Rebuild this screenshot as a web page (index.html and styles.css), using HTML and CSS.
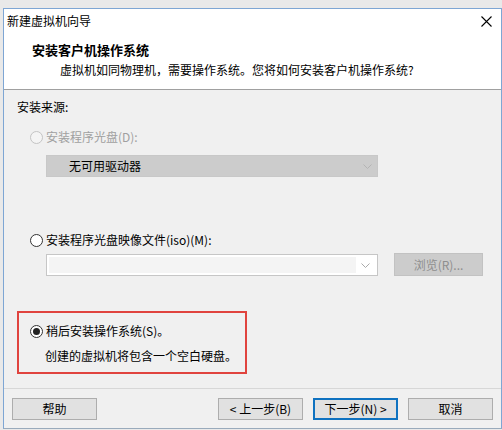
FILE: index.html
```html
<!DOCTYPE html>
<html lang="zh-CN">
<head>
    <meta charset="UTF-8">
    <title>新建虚拟机向导</title>
    <link rel="stylesheet" href="styles.css">
</head>
<body>
    <div class="window">
        <div class="titlebar">
            <span>新建虚拟机向导</span>
            <svg class="close" width="11" height="11" viewBox="0 0 11 11">
                <path d="M0.5 0.5 L10.5 10.5 M10.5 0.5 L0.5 10.5" stroke="#000" stroke-width="1.1" fill="none"/>
            </svg>
        </div>

        <div class="header">
            <div class="heading">安装客户机操作系统</div>
            <div class="subheading">虚拟机如同物理机，需要操作系统。您将如何安装客户机操作系统?</div>
        </div>

        <div class="content">
            <div class="label">安装来源:</div>

            <div class="option disabled opt-disc">
                <span class="radio"></span>
                <span>安装程序光盘(D):</span>
            </div>
            <div class="select-row">
                <div class="combo combo-disabled">
                    <span class="combo-text">无可用驱动器</span>
                    <svg class="chevron" width="9" height="5" viewBox="0 0 9 5"><path d="M0.5 0.5 L4.5 4.5 L8.5 0.5" stroke="#b4b4b4" fill="none"/></svg>
                </div>
            </div>

            <div class="option opt-iso">
                <span class="radio"></span>
                <span>安装程序光盘映像文件(iso)(M):</span>
            </div>
            <div class="select-row">
                <div class="combo combo-empty">
                    <span class="combo-field"></span>
                    <span class="combo-btn">
                        <svg width="9" height="5" viewBox="0 0 9 5"><path d="M0.5 0.5 L4.5 4.5 L8.5 0.5" stroke="#aaa" fill="none"/></svg>
                    </span>
                </div>
                <div class="browse">浏览(R)...</div>
            </div>

            <div class="highlight">
                <div class="option">
                    <span class="radio checked"></span>
                    <span>稍后安装操作系统(S)。</span>
                </div>
                <div class="note">创建的虚拟机将包含一个空白硬盘。</div>
            </div>
        </div>

        <div class="footer">
            <button class="btn">帮助</button>
            <div class="nav">
                <button class="btn">&lt; 上一步(B)</button>
                <button class="btn btn-default">下一步(N) &gt;</button>
                <button class="btn">取消</button>
            </div>
        </div>
    </div>
</body>
</html>
```

FILE: styles.css
```css
body {
    margin: 0;
    background-color: #e9e9e9;
    font-family: "Noto Sans CJK SC", "Liberation Sans", sans-serif;
    font-size: 12px;
    color: #000;
}

.window {
    margin: 8px 0 0 3px;
    width: 497px;
    height: 419px;
    border: 1px solid #7ea6d4;
    border-bottom-color: #9ab;
    background-color: #f0f0f0;
    display: flex;
    flex-direction: column;
    overflow: hidden;
}

.window > div {
    flex-shrink: 0;
}

.titlebar {
    height: 24px;
    padding: 0 9px 0 3px;
    display: flex;
    align-items: center;
    justify-content: space-between;
    background-color: #fff;
    line-height: 16px;
}

.close {
    margin-top: 1px;
}

.header {
    background-color: #fff;
    padding: 9px 0 11px 28px;
    border-bottom: 1px solid #a0a0a0;
    line-height: 16px;
}

.heading {
    font-size: 13px;
    font-weight: bold;
}

.subheading {
    margin-top: 4px;
    padding-left: 28px;
}

.content {
    flex: 1;
    padding: 9px 0 0 13px;
    line-height: 16px;
}

.window > .content {
    flex-shrink: 1;
}

.option {
    display: flex;
    align-items: center;
    gap: 3px;
}

.opt-disc {
    margin: 14px 0 0 13px;
}

.opt-iso {
    margin: 55px 0 0 13px;
}

.disabled {
    color: #a0a0a0;
}

.radio {
    width: 11px;
    height: 11px;
    border: 1px solid #333;
    border-radius: 50%;
    background-color: #fff;
    display: flex;
    align-items: center;
    justify-content: center;
}

.disabled .radio {
    border-color: #c4c4c4;
    background-color: #f4f4f4;
}

.radio.checked::after {
    content: "";
    width: 7px;
    height: 7px;
    border-radius: 50%;
    background-color: #222;
}

.select-row {
    display: flex;
    align-items: center;
    gap: 16px;
    margin: 10px 0 0 29px;
}

.opt-iso + .select-row {
    margin-top: 6px;
}

.combo {
    width: 332px;
    height: 22px;
    box-sizing: border-box;
    display: flex;
    align-items: center;
}

.combo-disabled {
    background-color: #cccccc;
    border: 1px solid #c8c8c8;
    justify-content: space-between;
    padding: 0 5px 0 22px;
}

.combo-empty {
    background-color: #fff;
    border: 1px solid #c6c6c6;
    padding: 2px;
}

.combo-field {
    flex: 1;
    height: 100%;
    background-color: #f4f4f4;
}

.combo-btn {
    width: 19px;
    display: flex;
    justify-content: center;
}

.browse {
    width: 89px;
    height: 23px;
    box-sizing: border-box;
    background-color: #cccccc;
    border: 1px solid #c2c2c2;
    color: #8e8e8e;
    display: flex;
    align-items: center;
    justify-content: center;
    margin-top: -1px;
}

.highlight {
    margin: 35px 0 0 0;
    width: 230px;
    height: 63px;
    box-sizing: border-box;
    border: 2px solid #e0443e;
    padding: 10px 0 0 11px;
}

.note {
    margin: 9px 0 0 15px;
}

.footer {
    height: 40px;
    box-sizing: border-box;
    border-top: 1px solid #d7d7d7;
    padding: 9px 8px 0 8px;
    display: flex;
    justify-content: space-between;
    align-items: flex-start;
}

.nav {
    display: flex;
    gap: 10px;
}

.btn {
    width: 85px;
    height: 22px;
    box-sizing: border-box;
    background-color: #e1e1e1;
    border: 1px solid #adadad;
    font-family: inherit;
    font-size: 12px;
    line-height: 16px;
    padding: 0;
    color: #000;
}

.btn-default {
    border: 2px solid #0f72c0;
}
```
